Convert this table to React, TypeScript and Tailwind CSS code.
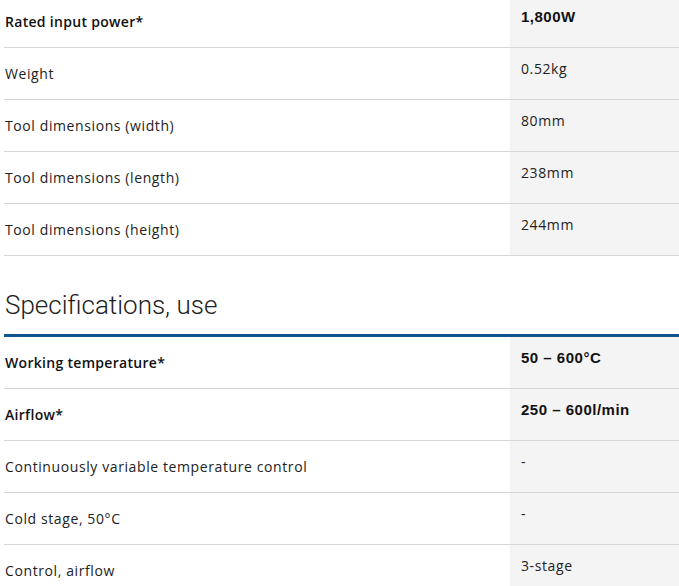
type Spec = { label: string; value: string; strong?: boolean };

const dimensions: Spec[] = [
  { label: 'Rated input power*', value: '1,800W', strong: true },
  { label: 'Weight', value: '0.52kg' },
  { label: 'Tool dimensions (width)', value: '80mm' },
  { label: 'Tool dimensions (length)', value: '238mm' },
  { label: 'Tool dimensions (height)', value: '244mm' },
];

const use: Spec[] = [
  { label: 'Working temperature*', value: '50 – 600°C', strong: true },
  { label: 'Airflow*', value: '250 – 600l/min', strong: true },
  { label: 'Continuously variable temperature control', value: '-' },
  { label: 'Cold stage, 50°C', value: '-' },
  { label: 'Control, airflow', value: '3-stage' },
];

function SpecRow({ spec }: { spec: Spec }) {
  return (
    <div className="flex h-[52px] border-b border-[#d6d6d6]">
      <div
        className={`flex flex-1 items-center pl-px ${
          spec.strong ? 'font-semibold tracking-[0.3px] text-[#111]' : 'tracking-[0.6px] text-[#222]'
        }`}
      >
        {spec.label}
      </div>
      <div
        className={`w-[169px] shrink-0 bg-[#f4f4f4] pl-[11px] pt-[11px] leading-5 ${
          spec.strong
            ? "font-['Liberation_Sans',Arial,sans-serif] text-[15px] font-bold tracking-[0.5px] text-[#111]"
            : 'tracking-[0.6px] text-[#222]'
        }`}
      >
        {spec.value}
      </div>
    </div>
  );
}

export default function App() {
  return (
    <div className="min-h-screen overflow-hidden bg-white pl-1 font-['Open_Sans',sans-serif] text-[14px]">
      <div className="-mt-[4px]">
        {dimensions.map((s) => (
          <SpecRow key={s.label} spec={s} />
        ))}
      </div>

      <h2 className="mt-[30px] border-b-[3px] border-[#0f5690] pb-[10px] pl-px font-['Roboto',sans-serif] text-[26px] font-light leading-[38px] text-[#222]">
        Specifications, use
      </h2>

      <div>
        {use.map((s) => (
          <SpecRow key={s.label} spec={s} />
        ))}
      </div>
    </div>
  );
}
